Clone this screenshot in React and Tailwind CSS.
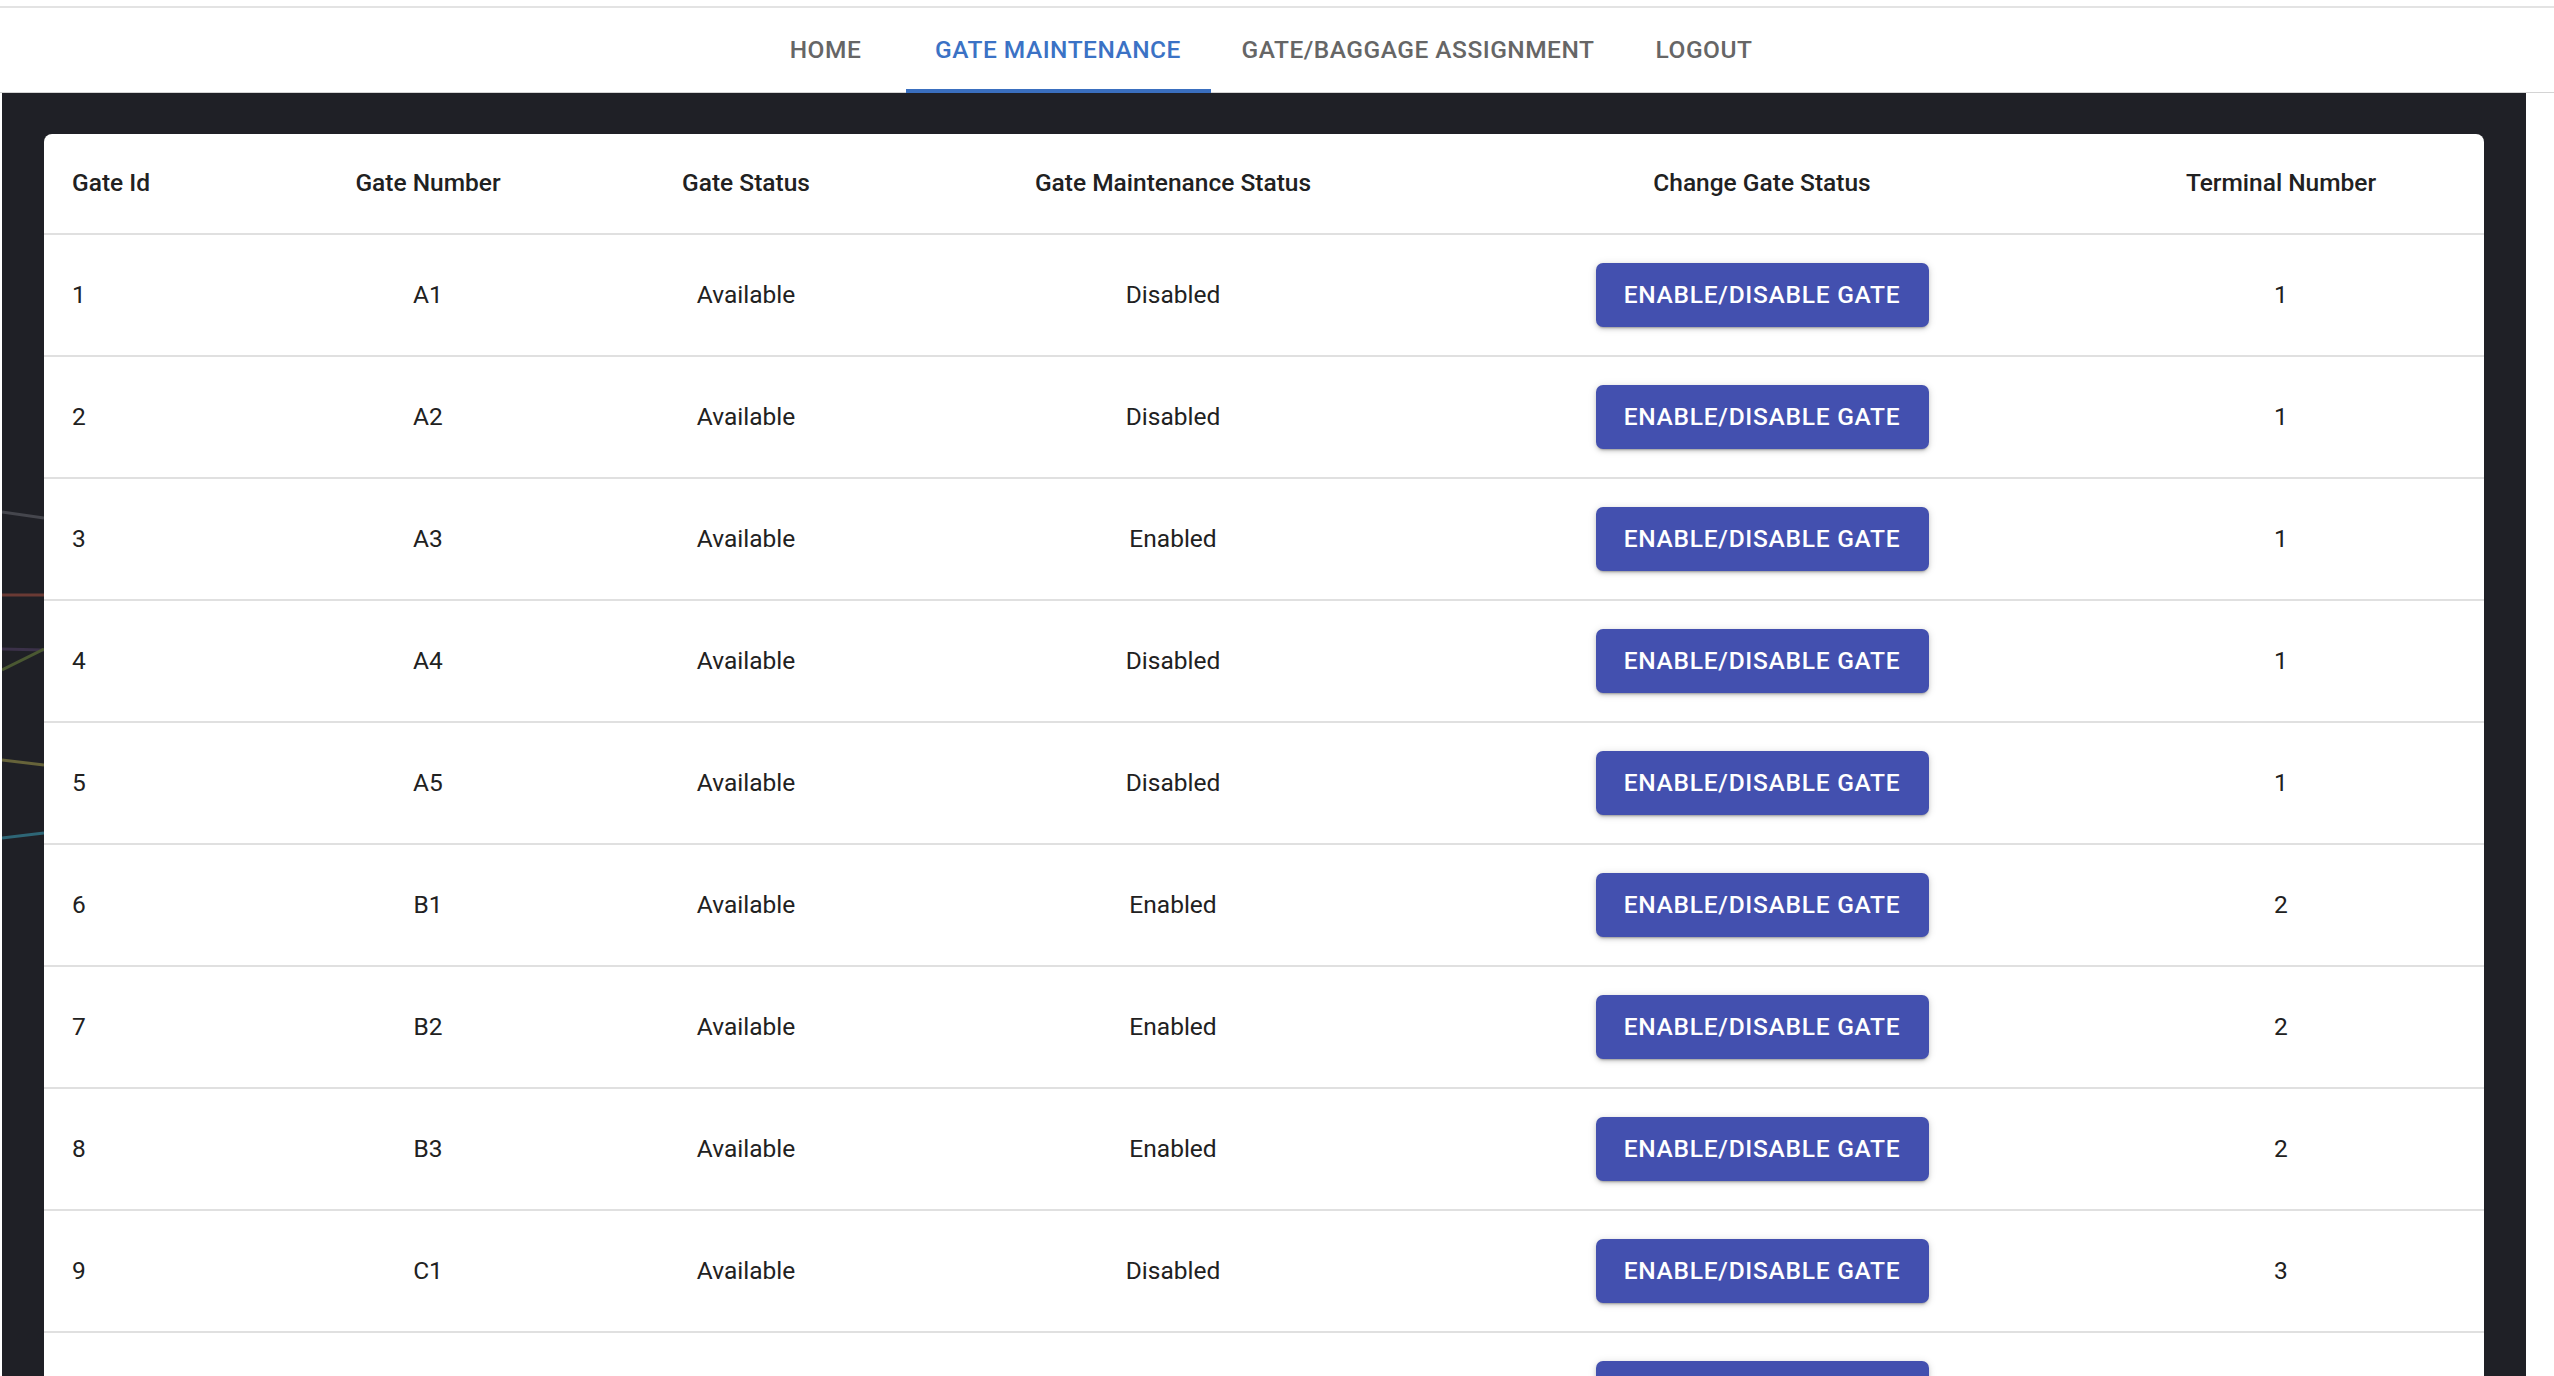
import React from 'react';

const gates = [
    { id: 1, number: 'A1', status: 'Available', maintenance: 'Disabled', terminal: 1 },
    { id: 2, number: 'A2', status: 'Available', maintenance: 'Disabled', terminal: 1 },
    { id: 3, number: 'A3', status: 'Available', maintenance: 'Enabled', terminal: 1 },
    { id: 4, number: 'A4', status: 'Available', maintenance: 'Disabled', terminal: 1 },
    { id: 5, number: 'A5', status: 'Available', maintenance: 'Disabled', terminal: 1 },
    { id: 6, number: 'B1', status: 'Available', maintenance: 'Enabled', terminal: 2 },
    { id: 7, number: 'B2', status: 'Available', maintenance: 'Enabled', terminal: 2 },
    { id: 8, number: 'B3', status: 'Available', maintenance: 'Enabled', terminal: 2 },
    { id: 9, number: 'C1', status: 'Available', maintenance: 'Disabled', terminal: 3 },
    { id: 10, number: 'C2', status: 'Available', maintenance: 'Disabled', terminal: 3 },
];

const tabs = [
    { label: 'HOME', width: 'w-[160px]' },
    { label: 'GATE MAINTENANCE', width: 'w-[305px]', active: true },
    { label: 'GATE/BAGGAGE ASSIGNMENT', width: 'w-[415px]' },
    { label: 'LOGOUT', width: 'w-[157px]' },
];

export default function App() {
    return (
        <div className="h-screen overflow-hidden bg-white font-['Roboto',sans-serif] text-[24.5px] text-[#212121]">
            {/* Top strip */}
            <div className="h-[8px] border-b-2 border-[#e3e3e3]"></div>

            {/* Tabs */}
            <nav className="h-[85px] flex justify-center pl-[2px] pr-[28px] border-b border-[#d4d4d4]">
                {tabs.map((t) => (
                    <div
                        key={t.label}
                        className={`relative flex items-center justify-center font-medium tracking-[0.02em] ${t.width} ${t.active ? 'text-[#3b72c5]' : 'text-[#666666]'}`}
                    >
                        {t.label}
                        {t.active && <div className="absolute left-0 right-0 bottom-[-1px] h-[4px] bg-[#3a6fbf]"></div>}
                    </div>
                ))}
            </nav>

            {/* Main Content */}
            <main className="relative ml-[2px] mr-[28px] bg-[#1f2026] px-[42px] pt-[41px]">
                {/* wallpaper lines showing in the gutter */}
                <svg className="absolute left-0 top-0 w-[42px] h-[900px]" viewBox="0 0 42 900" preserveAspectRatio="none">
                    <path d="M0 419 L42 425" stroke="#45464d" strokeWidth="3" fill="none" />
                    <path d="M0 502 L42 502" stroke="#6a3a34" strokeWidth="3" fill="none" />
                    <path d="M0 556 L42 557" stroke="#3b3149" strokeWidth="3" fill="none" />
                    <path d="M0 577 Q20 567 42 556" stroke="#4a5832" strokeWidth="3" fill="none" />
                    <path d="M0 667 L42 672" stroke="#66633a" strokeWidth="3" fill="none" />
                    <path d="M0 745 L42 740" stroke="#2e6676" strokeWidth="3" fill="none" />
                </svg>

                <div className="relative bg-white rounded-t-[8px] overflow-hidden">
                    <table className="w-full table-fixed border-collapse">
                        <colgroup>
                            <col className="w-[220px]" />
                            <col className="w-[328px]" />
                            <col className="w-[308px]" />
                            <col className="w-[546px]" />
                            <col className="w-[632px]" />
                            <col className="w-[406px]" />
                        </colgroup>
                        <thead>
                            <tr className="h-[100px] border-b-2 border-[#e0e0e0]">
                                <th className="pl-[28px] text-left font-medium">Gate Id</th>
                                <th className="text-center font-medium">Gate Number</th>
                                <th className="text-center font-medium">Gate Status</th>
                                <th className="text-center font-medium">Gate Maintenance Status</th>
                                <th className="text-center font-medium">Change Gate Status</th>
                                <th className="text-center font-medium">Terminal Number</th>
                            </tr>
                        </thead>
                        <tbody>
                            {gates.map((g) => (
                                <tr key={g.id} className="h-[122px] border-b-2 border-[#e0e0e0]">
                                    <td className="pl-[28px] text-left">{g.id}</td>
                                    <td className="text-center">{g.number}</td>
                                    <td className="text-center">{g.status}</td>
                                    <td className="text-center">{g.maintenance}</td>
                                    <td className="text-center">
                                        <button className="w-[333px] h-[64px] rounded-[7px] bg-[#4350af] text-white font-medium text-[24.5px] tracking-[0.03em] shadow-[0_3px_2px_-2px_rgba(0,0,0,0.25),0_2px_4px_0_rgba(0,0,0,0.14),0_1px_8px_0_rgba(0,0,0,0.12)]">
                                            ENABLE/DISABLE GATE
                                        </button>
                                    </td>
                                    <td className="text-center">{g.terminal}</td>
                                </tr>
                            ))}
                        </tbody>
                    </table>
                </div>
            </main>
        </div>
    );
}
